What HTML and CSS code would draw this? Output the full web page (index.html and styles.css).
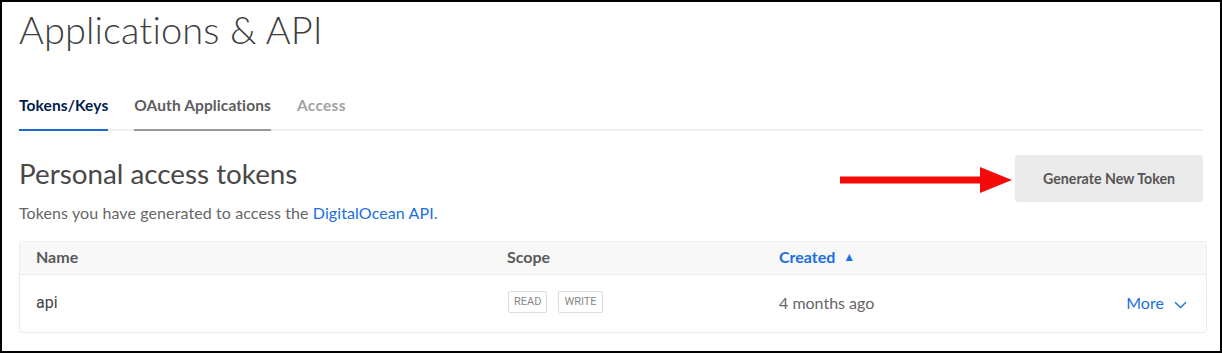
FILE: index.html
```html
<!DOCTYPE html>
<html>
<head>
<meta charset="utf-8">
<link rel="stylesheet" href="styles.css">
</head>
<body>
<div class="frame">
  <h1 class="title">Applications &amp; API</h1>
  <nav class="tabs">
    <a class="tab tab-active">Tokens/Keys</a>
    <a class="tab tab-visited">OAuth Applications</a>
    <a class="tab tab-muted">Access</a>
  </nav>
  <section class="section-head">
    <div class="section-text">
      <h2 class="section-title">Personal access tokens</h2>
      <p class="section-desc">Tokens you have generated to access the <a class="link">DigitalOcean API.</a></p>
    </div>
    <div class="actions">
      <svg class="arrow" width="172" height="26" viewBox="0 0 172 26">
        <rect x="0" y="9.5" width="142" height="7" fill="#f50a0a"/>
        <polygon points="140,0 172,13 140,26" fill="#f50a0a"/>
      </svg>
      <button class="btn">Generate New Token</button>
    </div>
  </section>
  <div class="table">
    <div class="row row-head">
      <div class="cell">Name</div>
      <div class="cell">Scope</div>
      <div class="cell sorted">Created <span class="caret">&#9650;</span></div>
      <div class="cell"></div>
    </div>
    <div class="row row-body">
      <div class="cell name">api</div>
      <div class="cell scopes"><span class="badge">READ</span><span class="badge">WRITE</span></div>
      <div class="cell created">4 months ago</div>
      <div class="cell more">More
        <svg class="chev" width="13" height="8" viewBox="0 0 13 8"><path d="M1 1.2 L6.5 6.5 L12 1.2" fill="none" stroke="#1b6fe0" stroke-width="1.4"/></svg>
      </div>
    </div>
  </div>
</div>
</body>
</html>
```
FILE: styles.css
```css
* { box-sizing: border-box; }
html, body { margin: 0; padding: 0; background: #fff; }
body { font-family: "Lato", "Open Sans", sans-serif; }

.frame {
  width: 1222px;
  height: 353px;
  border: 2px solid #000;
  padding: 0 17px 0 17px;
  overflow: hidden;
}

.title {
  margin: 4px 0 0 0;
  font-size: 38px;
  font-weight: 300;
  line-height: 46px;
  color: #3f3f3f;
  letter-spacing: 0.1px;
}

.tabs {
  display: flex;
  gap: 26px;
  margin-top: 43px;
  border-bottom: 2px solid #efefef;
}
.tab {
  font-size: 15.5px;
  font-weight: 700;
  letter-spacing: 0.1px;
  padding-bottom: 14px;
  margin-bottom: -2px;
  border-bottom: 2px solid transparent;
  line-height: 20px;
}
.tab-active { color: #031b4e; border-bottom-color: #1f69d6; }
.tab-visited { color: #5d5d5d; border-bottom-color: #999; }
.tab-muted { color: #a3a3a3; letter-spacing: 0.3px; }

.section-head {
  display: flex;
  justify-content: space-between;
  align-items: flex-start;
  margin-top: 24px;
}
.section-title {
  margin: 2px 0 0 0;
  font-size: 27.8px;
  font-weight: 400;
  line-height: 34px;
  color: #484848;
}
.section-desc {
  margin: 12px 0 0 0;
  font-size: 16px;
  letter-spacing: 0.1px;
  color: #666;
  line-height: 20px;
}
.link { color: #1b6fe0; }

.actions { display: flex; align-items: center; gap: 3px; }
.arrow { display: block; margin-top: 2px; }
.btn {
  width: 188px;
  height: 47px;
  border: none;
  border-radius: 3px;
  background: #ebebeb;
  color: #555;
  font-family: "Lato", sans-serif;
  font-size: 14.2px;
  font-weight: 700;
}

.table {
  margin-top: 18px;
  margin-right: -4px;
  border: 1px solid #ececec;
  border-radius: 3px;
}
.row {
  display: grid;
  grid-template-columns: 471px 272px 1fr 200px;
  align-items: center;
  padding: 0 18px 0 16px;
}
.row-head {
  height: 33px;
  padding-bottom: 4px;
  background: #f8f8f8;
  border-bottom: 1px solid #ececec;
  font-size: 16px;
  font-weight: 700;
}
.row-head .cell { color: #5a5a5a; }
.row-head .sorted { color: #1b6fe0; }
.caret { font-size: 12px; margin-left: 4px; position: relative; top: -2px; }
.row-body { height: 57px; padding-bottom: 3px; font-size: 16px; color: #555; }
.name { font-family: "Roboto", sans-serif; font-size: 16px; color: #444; }
.scopes { display: flex; gap: 11px; padding-left: 1px; }
.badge {
  font-family: "Roboto", sans-serif;
  font-size: 11px;
  color: #888;
  border: 1px solid #ddd;
  border-radius: 2px;
  padding: 4px 5px;
  line-height: 12px;
}
.created { color: #666; }
.more { text-align: right; color: #1b6fe0; padding-right: 1px; }
.chev { margin-left: 6px; }
```
